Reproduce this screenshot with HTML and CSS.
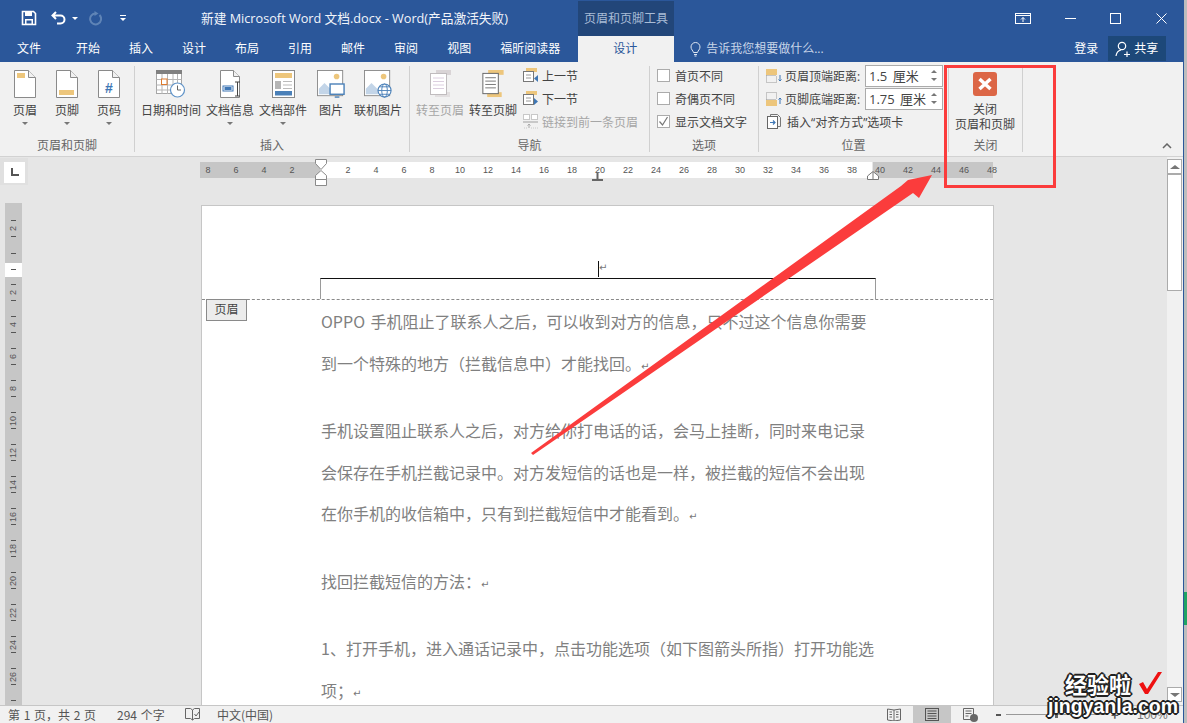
FILE: index.html
```html
<!DOCTYPE html>
<html lang="zh-CN">
<head>
    <meta charset="UTF-8">
    <title>新建 Microsoft Word 文档.docx - Word</title>
    <link rel="stylesheet" href="styles.css">
</head>
<body>
<div class="window">

    <!-- title bar -->
    <div class="titlebar">
        <div class="qat">
            <svg width="16" height="16" viewBox="0 0 16 16"><path d="M1.5 1.5h11l2 2v11h-13z" fill="none" stroke="#fff" stroke-width="1.6"/><rect x="4" y="1" width="7" height="5" fill="#fff"/><rect x="4" y="9" width="8" height="5.5" fill="#fff"/><rect x="5.5" y="10.5" width="5" height="3" fill="#2b579a"/></svg>
            <svg class="undo" width="16" height="14" viewBox="0 0 16 14"><path d="M5 1L1.5 4.5 5 8M2 4.5h7.5a4 4 0 0 1 0 8H6" fill="none" stroke="#fff" stroke-width="2"/></svg>
            <span class="mini-caret"></span>
            <svg class="redo" width="14" height="15" viewBox="0 0 14 15"><path d="M11.5 4a5.5 5.5 0 1 1-3.5-1.6" fill="none" stroke="#5f84b6" stroke-width="2"/><path d="M6.5 0v5l4-2.5z" fill="#5f84b6"/></svg>
            <span class="customize"></span>
        </div>
        <div class="doc-title">新建 Microsoft Word 文档.docx - Word(产品激活失败)</div>
        <div class="context-tab">页眉和页脚工具</div>
        <div class="win-btns">
            <svg class="wb-display" width="16" height="11" viewBox="0 0 16 11"><rect x=".5" y=".5" width="15" height="10" fill="none" stroke="#fff"/><path d="M.5 2.5h15M8 9V4.5M6 6.5l2-2 2 2" fill="none" stroke="#fff"/></svg>
            <svg class="wb-min" width="15" height="11" viewBox="0 0 15 11"><path d="M2 5.5h11" stroke="#fff"/></svg>
            <svg class="wb-max" width="11" height="11" viewBox="0 0 11 11"><rect x=".5" y=".5" width="10" height="10" fill="none" stroke="#fff"/></svg>
            <svg class="wb-close" width="11" height="11" viewBox="0 0 11 11"><path d="M.5.5l10 10M10.5.5l-10 10" stroke="#fff"/></svg>
        </div>
    </div>

    <!-- tabs -->
    <div class="tabs">
        <span class="tab tab-file">文件</span>
        <span class="tab">开始</span>
        <span class="tab">插入</span>
        <span class="tab">设计</span>
        <span class="tab">布局</span>
        <span class="tab">引用</span>
        <span class="tab">邮件</span>
        <span class="tab">审阅</span>
        <span class="tab">视图</span>
        <span class="tab tab-last">福昕阅读器</span>
        <span class="tab-active">设计</span>
        <div class="tell-me">
            <svg width="11" height="15" viewBox="0 0 11 15"><path d="M3.5 10.5C3 8.5 1 7.5 1 5a4.5 4.5 0 0 1 9 0c0 2.5-2 3.5-2.5 5.5zM4 12.5h3M4.5 14h2" fill="none" stroke="#dfe7f2"/></svg>
            <span>告诉我您想要做什么...</span>
        </div>
        <span class="login">登录</span>
        <div class="share">
            <svg width="15" height="16" viewBox="0 0 15 16"><circle cx="7" cy="5" r="3.7" fill="none" stroke="#fff" stroke-width="1.2"/><path d="M1 15c.5-3.5 2.5-5.5 5-6M9 13.5h6M12 10.5v6" fill="none" stroke="#fff" stroke-width="1.2"/></svg>
            <span>共享</span>
        </div>
    </div>

    <!-- ribbon -->
    <div class="ribbon">
        <div class="group group-hf">
            <div class="group-body pad-hf">
                <div class="big-btn w42">
                    <svg class="big-icon" width="22" height="28" viewBox="0 0 22 28"><path d="M.5.5h14l7 7v20H.5z" fill="#fff" stroke="#8a8a8a"/><path d="M14.5.5v7h7" fill="#f1f1f1" stroke="#8a8a8a"/><rect x="3" y="3" width="8" height="5" fill="#edc67c"/></svg>
                    <span>页眉</span><i class="caret"></i>
                </div>
                <div class="big-btn w42">
                    <svg class="big-icon" width="22" height="28" viewBox="0 0 22 28"><path d="M.5.5h14l7 7v20H.5z" fill="#fff" stroke="#8a8a8a"/><path d="M14.5.5v7h7" fill="#f1f1f1" stroke="#8a8a8a"/><rect x="3" y="20" width="15" height="5" fill="#edc67c"/></svg>
                    <span>页脚</span><i class="caret"></i>
                </div>
                <div class="big-btn w42">
                    <svg class="big-icon" width="22" height="28" viewBox="0 0 22 28"><path d="M.5.5h14l7 7v20H.5z" fill="#fff" stroke="#8a8a8a"/><path d="M14.5.5v7h7" fill="#f1f1f1" stroke="#8a8a8a"/><text x="11" y="23" text-anchor="middle" font-size="14" font-weight="700" font-family="Liberation Sans" fill="#3f77b5">#</text></svg>
                    <span>页码</span><i class="caret"></i>
                </div>
            </div>
            <div class="group-label">页眉和页脚</div>
        </div>

        <div class="group group-insert">
            <div class="group-body pad-wide">
                <div class="big-btn w60">
                    <svg class="big-icon" width="30" height="28" viewBox="0 0 30 28"><rect x=".5" y=".5" width="25" height="23" fill="#fff" stroke="#a6a6a6"/><rect x="0" y="0" width="26" height="4" fill="#808080"/><path d="M.5 9.5h25M.5 15h25M.5 20h25M6 4v20M11.5 4v20M17 4v20M21.5 4v20" stroke="#b5b5b5" fill="none"/><rect x="5.5" y="9" width="5.5" height="5.5" fill="#fff" stroke="#dd7a2e"/><circle cx="21.5" cy="20" r="7" fill="#fff" stroke="#5f93c8" stroke-width="1.2"/><path d="M21.5 15.5V20h3.5" fill="none" stroke="#666"/></svg>
                    <span>日期和时间</span>
                </div>
                <div class="big-btn w48">
                    <svg class="big-icon" width="21" height="28" viewBox="0 0 21 28"><path d="M.5.5h13l6 6v21H.5z" fill="#fff" stroke="#8a8a8a"/><path d="M13.5.5v6h6" fill="#f1f1f1" stroke="#8a8a8a"/><rect x="3" y="16" width="10" height="5" fill="#fff" stroke="#3f77b5"/><rect x="4.5" y="17" width="7" height="3" fill="#3f77b5"/><path d="M15 12h5M15 26h5M17.5 12v14" stroke="#444" fill="none"/></svg>
                    <span>文档信息</span><i class="caret"></i>
                </div>
                <div class="big-btn w48">
                    <svg class="big-icon" width="23" height="28" viewBox="0 0 23 28"><rect x=".5" y=".5" width="22" height="27" fill="#fff" stroke="#8a8a8a"/><rect x="3" y="3" width="17" height="5" fill="#edc67c"/><rect x="3" y="11" width="6" height="8" fill="#b5b5b5"/><path d="M11 11.5h9M11 15h9M11 18.5h9" stroke="#bbb"/><rect x="3" y="21" width="17" height="4.5" fill="#4a80b8"/></svg>
                    <span>文档部件</span><i class="caret"></i>
                </div>
                <div class="big-btn w38">
                    <svg class="big-icon" width="30" height="30" viewBox="0 0 30 30"><rect x=".5" y=".5" width="27" height="27" fill="#fff" stroke="#8a8a8a"/><circle cx="21" cy="7" r="3" fill="#edc67c"/><path d="M2 26V20l6-6 7 7v5z" fill="#c3d5e8"/><rect x="14" y="15" width="15" height="11" fill="#fff" stroke="#4a80b8" stroke-width="1.5"/><path d="M19 29h5" stroke="#4a80b8" stroke-width="1.5"/></svg>
                    <span>图片</span>
                </div>
                <div class="big-btn w46">
                    <svg class="big-icon" width="30" height="30" viewBox="0 0 30 30"><rect x=".5" y=".5" width="27" height="27" fill="#fff" stroke="#8a8a8a"/><circle cx="21" cy="7" r="3" fill="#edc67c"/><path d="M2 26V20l6-6 7 7v5z" fill="#c3d5e8"/><circle cx="22" cy="22" r="7" fill="#fff" stroke="#4a80b8" stroke-width="1.2"/><ellipse cx="22" cy="22" rx="3" ry="7" fill="none" stroke="#4a80b8"/><path d="M15 22h14M16.5 18h11M16.5 26h11" stroke="#4a80b8"/></svg>
                    <span>联机图片</span>
                </div>
            </div>
            <div class="group-label">插入</div>
        </div>

        <div class="group group-nav">
            <div class="group-body pad-wide">
                <div class="big-btn w48 disabled">
                    <svg class="big-icon" width="21" height="28" viewBox="0 0 21 28"><rect x="6" y="0" width="15" height="5" fill="#d9d4d6"/><rect x="5" y="22" width="15" height="5" fill="#e2dfe0"/><rect x=".5" y="3.5" width="16" height="21" fill="#fff" stroke="#c0bcbe"/><path d="M3 8h11M3 11.5h11M3 15h11M3 18.5h11" stroke="#dccfe0"/></svg>
                    <span>转至页眉</span>
                </div>
                <div class="big-btn w48">
                    <svg class="big-icon" width="22" height="29" viewBox="0 0 22 29"><rect x="6" y="0" width="16" height="5" fill="#edc67c"/><rect x="5" y="23" width="15" height="5" fill="#edc67c"/><rect x=".5" y="3.5" width="16" height="21" fill="#fff" stroke="#666"/><path d="M3 8h11M3 11.5h11M3 15h11M3 18.5h11" stroke="#777"/></svg>
                    <span>转至页脚</span>
                </div>
                <div class="small-list">
                    <div class="small-row">
                        <svg width="15" height="15" viewBox="0 0 15 15"><rect x="3" y="0" width="11" height="4" fill="#edc67c"/><rect x=".5" y="3.5" width="10" height="10" fill="#fff" stroke="#777"/><path d="M3 7h5M3 10h5" stroke="#999"/><path d="M15 7v7l-4-3.5z" fill="#3f77b5"/></svg>
                        <span>上一节</span>
                    </div>
                    <div class="small-row">
                        <svg width="15" height="15" viewBox="0 0 15 15"><rect x="3" y="0" width="11" height="4" fill="#edc67c"/><rect x=".5" y="3.5" width="10" height="10" fill="#fff" stroke="#777"/><path d="M3 7h5M3 10h5" stroke="#999"/><path d="M11 7v7l4-3.5z" fill="#3f77b5"/></svg>
                        <span>下一节</span>
                    </div>
                    <div class="small-row disabled">
                        <svg width="15" height="15" viewBox="0 0 15 15"><rect x=".5" y=".5" width="6" height="5" fill="#fff" stroke="#c8c8c8"/><rect x="8.5" y=".5" width="6" height="5" fill="#fff" stroke="#c8c8c8"/><rect x="0" y="7" width="15" height="2" fill="#c8c8c8"/><path d="M1 14h4M8 14h7" stroke="#c8c8c8" stroke-dasharray="1 1"/><path d="M6 10v4M4.5 11.5L6 10l1.5 1.5" fill="none" stroke="#aaa"/></svg>
                        <span>链接到前一条页眉</span>
                    </div>
                </div>
            </div>
            <div class="group-label">导航</div>
        </div>

        <div class="group group-options">
            <div class="small-list options-list">
                <label class="small-row check-row"><i class="check"></i><span>首页不同</span></label>
                <label class="small-row check-row"><i class="check"></i><span>奇偶页不同</span></label>
                <label class="small-row check-row">
                    <i class="check"><svg width="11" height="11" viewBox="0 0 11 11"><path d="M1.5 5.5l3 3.5 5-8" fill="none" stroke="#777" stroke-width="1.2"/></svg></i>
                    <span>显示文档文字</span>
                </label>
            </div>
            <div class="group-label">选项</div>
        </div>

        <div class="group group-pos">
            <div class="small-list pos-list">
                <div class="small-row pos-row">
                    <svg width="16" height="14" viewBox="0 0 16 14"><rect x="0" y="0" width="11" height="6" fill="#edc67c"/><path d="M.5 6.5h10M.5 6.5v7h10v-7" fill="none" stroke="#999" stroke-dasharray="1 1"/><path d="M14 6v6M12.5 10.5L14 12l1.5-1.5" fill="none" stroke="#3f77b5"/></svg>
                    <span class="pos-text">页眉顶端距离:</span>
                    <div class="spin"><span>1.5 厘米</span><div class="spin-arrows"><i class="up"></i><i class="down"></i></div></div>
                </div>
                <div class="small-row pos-row">
                    <svg width="16" height="14" viewBox="0 0 16 14"><rect x="0" y="8" width="11" height="6" fill="#edc67c"/><path d="M.5 7.5h10M.5 7.5v-7h10v7" fill="none" stroke="#999" stroke-dasharray="1 1"/><path d="M14 12V6M12.5 7.5L14 6l1.5 1.5" fill="none" stroke="#3f77b5"/></svg>
                    <span class="pos-text">页脚底端距离:</span>
                    <div class="spin"><span>1.75 厘米</span><div class="spin-arrows"><i class="up"></i><i class="down"></i></div></div>
                </div>
                <div class="small-row pos-row">
                    <svg class="align-icon" width="14" height="15" viewBox="0 0 14 15"><path d="M3.5 2.5V.5h7l3 3v9h-3" fill="none" stroke="#777"/><rect x=".5" y="2.5" width="10" height="12" fill="#fff" stroke="#666"/><path d="M3 8.5h5M6 6.5l2 2-2 2" fill="none" stroke="#3f77b5" stroke-width="1.2"/></svg>
                    <span class="pos-text">插入“对齐方式”选项卡</span>
                </div>
            </div>
            <div class="group-label">位置</div>
        </div>

        <div class="group group-close">
            <div class="big-btn close-btn">
                <svg width="24" height="24" viewBox="0 0 24 24"><rect width="24" height="24" rx="3" fill="#dc6646"/><path d="M6.5 7l11 10M17.5 7l-11 10" stroke="#fff" stroke-width="3.5"/></svg>
                <span>关闭<br>页眉和页脚</span>
            </div>
            <div class="group-label">关闭</div>
        </div>

        <div class="collapse">
            <svg width="10" height="6" viewBox="0 0 10 6"><path d="M1 5l4-4 4 4" fill="none" stroke="#666" stroke-width="1.5"/></svg>
        </div>
    </div>

    <!-- document area -->
    <div class="work">
        <div class="main">
            <div class="ruler-row">
                <div class="tab-box"><i class="tab-l"></i></div>
                <div class="h-ruler">
                    <div class="hr-grey hr-left"><span>8</span><span>6</span><span>4</span><span>2</span></div>
                    <div class="hr-white"><span>2</span><span>4</span><span>6</span><span>8</span><span>10</span><span>12</span><span>14</span><span>16</span><span>18</span><span>20</span><span>22</span><span>24</span><span>26</span><span>28</span><span>30</span><span>32</span><span>34</span><span>36</span><span>38</span></div>
                    <div class="hr-grey hr-right"><span>40</span><span>42</span><span>44</span><span>46</span><span>48</span></div>
                </div>
                <svg class="marker marker-left" width="12" height="28" viewBox="0 0 12 28"><path d="M.5.5h11v4L6 10.5.5 4.5zM6 11.5l5.5 5v4H.5v-4zM.5 20.5h11v6H.5z" fill="#fff" stroke="#8a8a8a"/></svg>
                <svg class="marker marker-tab" width="11" height="8" viewBox="0 0 11 8"><path d="M5.5 0v6M0 7h11" stroke="#666" stroke-width="2" fill="none"/></svg>
                <svg class="marker marker-right" width="12" height="9" viewBox="0 0 12 9"><path d="M6 .5l5.5 4.5v3.500H.5V5z" fill="#fff" stroke="#777"/><path d="M6 1v7" stroke="#777"/></svg>
            </div>
            <div class="doc-row">
                <div class="v-ruler">
                    <div class="vr-unit"><i></i><b>2</b><i></i></div>
                    <div class="vr-unit vr-zero"><i></i><b></b><i></i></div>
                    <div class="vr-unit"><i></i><b>2</b><i></i></div>
                    <div class="vr-unit"><i></i><b>4</b><i></i></div>
                    <div class="vr-unit"><i></i><b>6</b><i></i></div>
                    <div class="vr-unit"><i></i><b>8</b><i></i></div>
                    <div class="vr-unit"><i></i><b>10</b><i></i></div>
                    <div class="vr-unit"><i></i><b>12</b><i></i></div>
                    <div class="vr-unit"><i></i><b>14</b><i></i></div>
                    <div class="vr-unit"><i></i><b>16</b><i></i></div>
                    <div class="vr-unit"><i></i><b>18</b><i></i></div>
                    <div class="vr-unit"><i></i><b>20</b><i></i></div>
                    <div class="vr-unit"><i></i><b>22</b><i></i></div>
                    <div class="vr-unit"><i></i><b>24</b><i></i></div>
                    <div class="vr-unit"><i></i><b>26</b><i></i></div>
                    <div class="vr-unit"><i></i><b></b><i></i></div>
                </div>
                <div class="page">
                    <div class="page-header">
                        <div class="header-para"><i class="cursor"></i></div>
                        <div class="header-box"></div>
                    </div>
                    <div class="header-tag">页眉</div>
                    <div class="page-body">
                        <p>OPPO 手机阻止了联系人之后，可以收到对方的信息，只不过这个信息你需要到一个特殊的地方（拦截信息中）才能找回。</p>
                        <p>手机设置阻止联系人之后，对方给你打电话的话，会马上挂断，同时来电记录会保存在手机拦截记录中。对方发短信的话也是一样，被拦截的短信不会出现在你手机的收信箱中，只有到拦截短信中才能看到。</p>
                        <p>找回拦截短信的方法：</p>
                        <p>1、打开手机，进入通话记录中，点击功能选项（如下图箭头所指）打开功能选项；</p>
                    </div>
                </div>
            </div>
        </div>
        <div class="scrollbar">
            <div class="sb-top">
                <div class="sb-btn"><i class="up"></i></div>
                <div class="sb-thumb"></div>
            </div>
            <div class="sb-btn"><i class="down"></i></div>
        </div>
    </div>

    <!-- status bar -->
    <div class="statusbar">
        <span class="st-pages">第 1 页，共 2 页</span>
        <span class="st-words">294 个字</span>
        <svg class="st-book" width="15" height="13" viewBox="0 0 15 13"><path d="M.5.5h5l2 1.5v10l-2-1.5h-5zM7.5 2l2-1.5h5v10h-5l-2 1.5M9.5 6l1.5 2 3-4" fill="none" stroke="#666"/></svg>
        <span class="st-lang">中文(中国)</span>
        <div class="st-views">
            <svg width="14" height="13" viewBox="0 0 14 13"><path d="M.5 1l6.5 1 6.5-1v11L7 13 .5 12zM7 2v11M2.5 4h2.5M2.5 6.5h2.5M2.5 9h2.5M9 4h2.500M9 6.5h2.5M9 9h2.5" fill="none" stroke="#666"/></svg>
            <div class="view-active"><svg width="14" height="13" viewBox="0 0 14 13"><rect x=".5" y=".5" width="13" height="12" fill="none" stroke="#555"/><path d="M2.5 3h9M2.5 5.5h9M2.5 8h9M2.5 10.5h9" stroke="#555"/></svg></div>
            <svg width="15" height="14" viewBox="0 0 15 14"><path d="M.5.5h10v11h-10zM2.5 3h6M2.5 5.5h6M2.5 8h3" fill="none" stroke="#666"/><circle cx="11" cy="10" r="4" fill="#666"/></svg>
        </div>
        <div class="zoom">
            <i class="z-minus"></i>
            <div class="z-track"><i class="z-thumb"></i></div>
            <span class="z-plus">+</span>
            <span class="z-value">100%</span>
        </div>
    </div>
</div>

<!-- strip of the desktop behind the window -->
<div class="behind"><i class="behind-green"></i></div>

<!-- annotations drawn on the screenshot -->
<svg class="annotations" width="1187" height="723" viewBox="0 0 1187 723">
    <rect x="945.5" y="66.5" width="109" height="120" fill="none" stroke="#fb3c3c" stroke-width="3"/>
    <polygon points="531,453 901,186 908,180 932,175 919,198 913,193 533,455" fill="#fb3c3c"/>
</svg>

<div class="watermark">
    <div class="wm-top">
        <span>经验啦</span>
        <svg width="24" height="24" viewBox="0 0 24 24"><path d="M1 13l4-2 4 7L20 1h4L10 23H7z" fill="#ee1111"/></svg>
    </div>
    <div class="wm-url">jingyanla.com</div>
</div>
</body>
</html>
```

FILE: styles.css
```css
* {
    box-sizing: border-box;
}
html, body {
    margin: 0;
    height: 100%;
}
body {
    width: 1187px;
    height: 723px;
    overflow: hidden;
    display: flex;
    position: relative;
    font-family: "Open Sans", "Noto Sans CJK SC", sans-serif;
    font-size: 12px;
    color: #444;
    background: #bdbdbd;
}
i {
    display: block;
    font-style: normal;
}
svg {
    display: block;
    flex: none;
}
.window {
    width: 1184px;
    height: 723px;
    display: flex;
    flex-direction: column;
    border-right: 1px solid #2b579a;
    background: #f1f1f1;
}
.behind {
    flex: 1;
    padding-top: 592px;
}
.behind-green {
    height: 33px;
    background: #1fa463;
}

/* title bar */
.titlebar {
    height: 36px;
    flex: none;
    display: flex;
    background: #2b579a;
    color: #fff;
}
.qat {
    width: 201px;
    flex: none;
    display: flex;
    align-items: center;
    padding-left: 21px;
}
.undo {
    margin-left: 14px;
}
.mini-caret {
    margin-left: 5px;
    border-left: 3px solid transparent;
    border-right: 3px solid transparent;
    border-top: 3px solid #fff;
}
.redo {
    margin-left: 10px;
}
.customize {
    margin-left: 18px;
    width: 6px;
    height: 6px;
    border-top: 1px solid #fff;
    position: relative;
}
.customize::after {
    content: "";
    position: absolute;
    top: 2px;
    left: 0;
    border-left: 3px solid transparent;
    border-right: 3px solid transparent;
    border-top: 3px solid #fff;
}
.doc-title {
    width: 377px;
    flex: none;
    line-height: 36px;
    font-size: 12.7px;
    white-space: nowrap;
    color: #f2f5fa;
}
.context-tab {
    width: 96px;
    flex: none;
    margin-top: 1px;
    background: #224679;
    color: #a9bcd6;
    text-align: center;
    line-height: 35px;
}
.win-btns {
    flex: 1;
    display: flex;
    align-items: center;
    padding-left: 341px;
}
.wb-min {
    margin-left: 32px;
}
.wb-max {
    margin-left: 32px;
}
.wb-close {
    margin-left: 35px;
}

/* tabs */
.tabs {
    height: 26px;
    flex: none;
    display: flex;
    align-items: flex-start;
    background: #2b579a;
    color: #fff;
    line-height: 26px;
}
.tab {
    margin-right: 29px;
    flex: none;
}
.tab-file {
    margin-left: 17px;
    margin-right: 35px;
}
.tab-last {
    margin-right: 18px;
}
.tab-active {
    width: 96px;
    flex: none;
    padding-right: 2px;
    text-align: center;
    background: #f1f1f1;
    color: #2b579a;
}
.tell-me {
    width: 400px;
    flex: none;
    display: flex;
    align-items: center;
    height: 26px;
    padding-left: 16px;
    gap: 5px;
    color: #c8d5e8;
}
.login {
    width: 34px;
    flex: none;
}
.share {
    width: 58px;
    height: 25px;
    flex: none;
    display: flex;
    align-items: center;
    gap: 4px;
    padding-left: 7px;
    background: #1d4879;
}

/* ribbon */
.ribbon {
    height: 95px;
    flex: none;
    display: flex;
    border-bottom: 1px solid #d2d2d2;
    background: #f1f1f1;
}
.group {
    height: 86px;
    margin-top: 4px;
    flex: none;
    border-right: 1px solid #d0d0d0;
    display: flex;
    flex-direction: column;
}
.group-hf { width: 135px; }
.group-insert { width: 275px; }
.group-nav { width: 240px; }
.group-options { width: 109px; }
.group-pos { width: 190px; }
.group-close { width: 74px; }
.group-body {
    flex: 1;
    display: flex;
    min-height: 0;
}
.pad-hf {
    padding-left: 4px;
}
.pad-wide {
    padding-left: 6px;
    gap: 5px;
}
.group-label {
    height: 16px;
    margin-bottom: -2px;
    flex: none;
    text-align: center;
    line-height: 16px;
    color: #666;
}
.big-btn {
    display: flex;
    flex-direction: column;
    align-items: center;
    padding-top: 4px;
    white-space: nowrap;
    flex: none;
    line-height: 16px;
}
.big-icon {
    height: 28px;
    margin-bottom: 5px;
    overflow: visible;
}
.w38 { width: 38px; }
.w42 { width: 42px; }
.w46 { width: 46px; }
.w48 { width: 48px; }
.w60 { width: 60px; }
.caret {
    margin-top: 3px;
    border-left: 3px solid transparent;
    border-right: 3px solid transparent;
    border-top: 3px solid #777;
}
.disabled {
    color: #a6a6a6;
}
.small-list {
    display: flex;
    flex-direction: column;
    margin-top: -2px;
    margin-left: 1px;
}
.small-row {
    height: 23px;
    flex: none;
    display: flex;
    align-items: center;
    gap: 4px;
    white-space: nowrap;
}
.options-list {
    flex: 1;
    min-height: 0;
    margin-left: 7px;
}
.check-row {
    gap: 5px;
}
.check {
    width: 13px;
    height: 13px;
    background: #fff;
    border: 1px solid #ababab;
}
.pos-list {
    flex: 1;
    min-height: 0;
    margin-left: 7px;
}
.pos-row {
    gap: 3px;
}
.align-icon {
    margin-left: 1px;
    margin-right: 3px;
}
.pos-text {
    width: 77px;
    flex: none;
}
.spin {
    width: 78px;
    height: 22px;
    flex: none;
    display: flex;
    align-items: center;
    justify-content: space-between;
    padding: 0 5px 0 3px;
    background: #fff;
    border: 1px solid #ababab;
    font-size: 13px;
    word-spacing: 2px;
}
.spin-arrows {
    display: flex;
    flex-direction: column;
    gap: 5px;
}
.up {
    border-left: 3px solid transparent;
    border-right: 3px solid transparent;
    border-bottom: 3px solid #777;
}
.down {
    border-left: 3px solid transparent;
    border-right: 3px solid transparent;
    border-top: 3px solid #777;
}
.close-btn {
    flex: 1;
    padding: 6px 1px 0 0;
    text-align: center;
    line-height: 15px;
}
.close-btn span {
    margin-top: 6px;
}
.collapse {
    flex: 1;
    display: flex;
    justify-content: flex-end;
    align-items: flex-end;
    padding: 0 11px 7px 0;
}

/* rulers and page */
.work {
    flex: 1;
    min-height: 0;
    display: flex;
    background: #e6e6e6;
}
.main {
    flex: 1;
    min-width: 0;
    display: flex;
    flex-direction: column;
    overflow: hidden;
}
.ruler-row {
    height: 46px;
    flex: none;
    position: relative;
}
.tab-box {
    position: absolute;
    left: 0;
    top: 1px;
    width: 28px;
    height: 27px;
    background: #e0e0e0;
    padding: 4px;
}
.tab-box::before {
    content: "";
    display: block;
    width: 21px;
    height: 21px;
    background: #fff;
}
.tab-l {
    position: absolute;
    left: 11px;
    top: 10px;
    width: 8px;
    height: 8px;
    border-left: 2px solid #555;
    border-bottom: 2px solid #555;
}
.h-ruler {
    display: flex;
    margin-left: 200px;
    padding-top: 5px;
    height: 21px;
    font-family: "Liberation Sans", sans-serif;
    font-size: 9px;
    color: #555;
}
.h-ruler span {
    width: 28px;
    flex: none;
    text-align: center;
    line-height: 16px;
}
.hr-grey, .hr-white {
    display: flex;
    height: 16px;
    flex: none;
}
.hr-grey {
    background: #c6c6c6;
}
.hr-white {
    background: #fff;
}
.hr-left {
    width: 120px;
}
.hr-left span:first-child {
    margin-left: -6px;
}
.hr-white {
    width: 552px;
    padding-left: 14px;
}
.hr-right {
    width: 120px;
    margin-left: 1px;
}
.hr-right span:first-child {
    margin-left: -7px;
}
.marker {
    position: absolute;
}
.marker-left {
    left: 315px;
    top: 2px;
}
.marker-tab {
    left: 592px;
    top: 16px;
}
.marker-right {
    left: 867px;
    top: 14px;
}
.doc-row {
    flex: 1;
    min-height: 0;
    display: flex;
}
.v-ruler {
    width: 17px;
    flex: none;
    margin-left: 5px;
    padding-top: 9px;
    overflow: hidden;
    background: linear-gradient(#c6c6c6 60px, #fff 60px, #fff 74px, #c6c6c6 74px);
    font-family: "Liberation Sans", sans-serif;
    font-size: 9px;
    color: #555;
}
.vr-unit {
    height: 32px;
    display: flex;
    flex-direction: column;
    align-items: center;
    justify-content: center;
}
.vr-unit i {
    width: 5px;
    height: 1px;
    background: #555;
    flex: none;
}
.vr-unit b {
    height: 15px;
    flex: none;
    font-weight: 400;
    line-height: 17px;
    text-align: center;
    writing-mode: vertical-rl;
    transform: rotate(180deg);
}
.vr-zero {
    margin-top: 1px;
    margin-bottom: -1px;
}
.page {
    width: 793px;
    height: 600px;
    flex: none;
    margin: 2px 0 0 179px;
    position: relative;
    background: #fff;
    border: 1px solid #c6c6c6;
}
.page-header {
    height: 94px;
    border-bottom: 1px dashed #8a8a8a;
    padding-top: 55px;
}
.header-para {
    height: 17px;
    margin-left: 396px;
    display: flex;
    align-items: flex-start;
    font-family: "DejaVu Sans", sans-serif;
    font-size: 10px;
    line-height: 1;
    color: #777;
}
.header-para::after {
    content: "↵";
    margin-top: 2px;
}
.cursor {
    width: 1px;
    height: 16px;
    background: #111;
}
.header-box {
    height: 21px;
    margin: 0 117px 0 118px;
    border-top: 1px solid #111;
    border-left: 1px solid #9a9a9a;
    border-right: 1px solid #9a9a9a;
}
.header-tag {
    position: absolute;
    left: 4px;
    top: 93px;
    width: 41px;
    height: 22px;
    background: #ececec;
    border: 1px solid #8a8a8a;
    text-align: center;
    line-height: 20px;
    color: #444;
}
.page-body {
    width: 675px;
    padding: 1px 0 0 119px;
    font-family: "Noto Sans CJK SC", sans-serif;
    font-size: 16px;
    line-height: 41.7px;
    color: #808080;
    word-spacing: 2px;
}
.page-body p {
    margin: 0 0 25.6px;
}
.page-body p::after {
    content: "↵";
    font-family: "DejaVu Sans", sans-serif;
    font-size: 10px;
    line-height: 1;
    color: #777;
}

/* scroll bar */
.scrollbar {
    width: 16px;
    flex: none;
    display: flex;
    flex-direction: column;
    justify-content: space-between;
    padding: 2px 1px 3px 0;
    background: #f1f1f1;
}
.sb-btn {
    width: 15px;
    height: 15px;
    display: flex;
    align-items: center;
    justify-content: center;
    background: #fff;
    border: 1px solid #ababab;
}
.sb-btn .up {
    border-left-width: 5px;
    border-right-width: 5px;
    border-bottom-width: 4px;
}
.sb-btn .down {
    border-left-width: 5px;
    border-right-width: 5px;
    border-top-width: 4px;
}
.sb-thumb {
    width: 15px;
    height: 117px;
    background: #fff;
    border: 1px solid #ababab;
}

/* status bar */
.statusbar {
    height: 18px;
    flex: none;
    display: flex;
    align-items: center;
    position: relative;
    background: #f1f1f1;
    border-top: 1px solid #c6c6c6;
    font-family: "Noto Sans CJK SC", sans-serif;
    font-size: 12px;
    line-height: 16px;
    word-spacing: 1px;
    color: #555;
    padding-left: 8px;
}
.st-pages {
    width: 109px;
    flex: none;
    white-space: nowrap;
}
.st-words {
    width: 68px;
    flex: none;
    white-space: nowrap;
}
.st-book {
    margin-right: 17px;
}
.st-lang {
    width: 670px;
    flex: none;
}
.st-views {
    display: flex;
    align-items: center;
    height: 17px;
}
.view-active {
    width: 38px;
    height: 17px;
    margin: 0 12px;
    background: #c6c6c6;
    display: flex;
    align-items: center;
    justify-content: center;
}
.zoom {
    display: flex;
    align-items: center;
    margin-left: 18px;
}
.z-minus {
    width: 5px;
    height: 2px;
    background: #555;
}
.z-track {
    width: 100px;
    height: 1px;
    margin: 0 5px;
    background: #999;
    position: relative;
}
.z-thumb {
    position: absolute;
    left: 49px;
    top: -3px;
    width: 3px;
    height: 7px;
    background: #666;
}
.z-plus {
    width: 8px;
    font-size: 13px;
    font-weight: 700;
}
.z-value {
    margin-left: 18px;
    color: #777;
    font-family: "Liberation Sans", sans-serif;
}

/* overlays */
.annotations {
    position: absolute;
    left: 0;
    top: 0;
    pointer-events: none;
}
.watermark {
    position: absolute;
    left: 1048px;
    top: 670px;
    width: 124px;
    color: #fff;
    font-family: "Noto Sans CJK SC", sans-serif;
    font-weight: 700;
    text-shadow: -1px -1px 0 #222, 1px -1px 0 #222, -1px 1px 0 #222, 1px 1px 0 #222, 0 -2px 0 #222, 0 2px 0 #222, -2px 0 0 #222, 2px 0 0 #222;
}
.wm-top {
    display: flex;
    align-items: center;
    padding-left: 17px;
    gap: 7px;
    height: 26px;
    font-size: 22px;
    line-height: 26px;
}
.wm-url {
    font-family: "Liberation Sans", sans-serif;
    font-size: 19.5px;
    line-height: 21px;
    white-space: nowrap;
}
```
